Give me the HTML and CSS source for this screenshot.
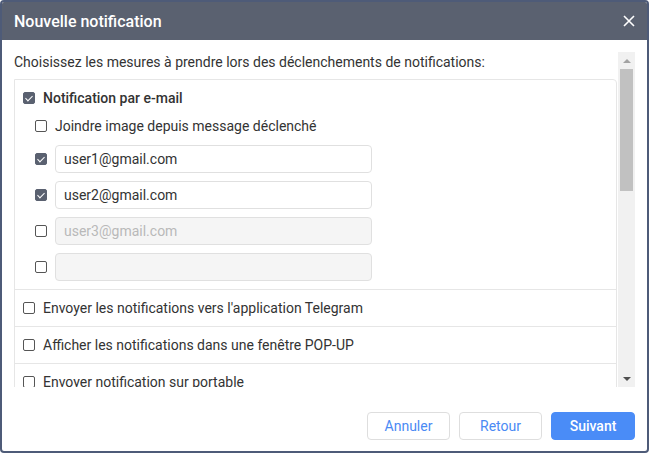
FILE: index.html
```html
<!DOCTYPE html>
<html lang="fr">
<head>
<meta charset="utf-8">
<title>Nouvelle notification</title>
<link rel="stylesheet" href="styles.css">
</head>
<body>
<div class="dialog">
  <div class="header">
    <span class="title">Nouvelle notification</span>
    <svg class="close" width="12" height="12" viewBox="0 0 12 12"><path d="M1 1 L11 11 M11 1 L1 11" stroke="#fff" stroke-width="1.6" fill="none"/></svg>
  </div>
  <div class="main">
    <div class="content">
      <p class="intro">Choisissez les mesures à prendre lors des déclenchements de notifications:</p>
      <div class="list">
        <div class="section">
          <div class="row strong"><span class="cb checked"></span>Notification par e-mail</div>
          <div class="sub">
            <div class="row"><span class="cb"></span>Joindre image depuis message déclenché</div>
            <div class="inputs">
              <div class="irow"><span class="cb checked"></span><div class="field">user1@gmail.com</div></div>
              <div class="irow"><span class="cb checked"></span><div class="field">user2@gmail.com</div></div>
              <div class="irow"><span class="cb"></span><div class="field disabled">user3@gmail.com</div></div>
              <div class="irow"><span class="cb"></span><div class="field disabled"></div></div>
            </div>
          </div>
        </div>
        <div class="section">
          <div class="row"><span class="cb"></span>Envoyer les notifications vers l'application Telegram</div>
        </div>
        <div class="section">
          <div class="row"><span class="cb"></span>Afficher les notifications dans une fenêtre POP-UP</div>
        </div>
        <div class="section">
          <div class="row"><span class="cb"></span>Envoyer notification sur portable</div>
        </div>
      </div>
    </div>
    <div class="scrollbar">
      <div class="arrow up"></div>
      <div class="track"><div class="thumb"></div></div>
      <div class="arrow down"></div>
    </div>
  </div>
  <div class="footer">
    <button class="btn">Annuler</button>
    <button class="btn">Retour</button>
    <button class="btn primary">Suivant</button>
  </div>
</div>
</body>
</html>
```

FILE: styles.css
```css
* { box-sizing: border-box; }
html, body { margin: 0; padding: 0; }
body {
  width: 649px;
  height: 453px;
  font-family: Roboto, "Liberation Sans", Arial, sans-serif;
  font-size: 14px;
  color: #333;
  background: #fff;
  overflow: hidden;
}
.dialog {
  width: 649px;
  height: 453px;
  border: 2px solid #4e5b78;
  border-radius: 4px;
  display: flex;
  flex-direction: column;
  background: #fff;
  overflow: hidden;
}
.header {
  height: 38px;
  flex: none;
  background: #5a6170;
  display: flex;
  align-items: center;
  justify-content: space-between;
  padding: 0 12px 0 12px;
}
.title {
  color: #fff;
  font-size: 16px;
  font-weight: 500;
}
.close { display: block; margin-right: 0; }
.main {
  height: 347px;
  flex: none;
  padding: 12px 12px 0 12px;
  display: flex;
  gap: 1px;
}
.content {
  flex: 1;
  height: 335px;
  overflow: hidden;
}
.intro {
  margin: 0 0 7px 0;
  line-height: 20px;
}
.list {
  border: 1px solid #e6e6e6;
  border-top-right-radius: 4px;
}
.section {
  padding: 8px 8px;
  border-bottom: 1px solid #e6e6e6;
}
.row {
  display: flex;
  align-items: center;
  gap: 8px;
  line-height: 20px;
}
.row.strong { font-weight: 500; }
.sub {
  padding-left: 12px;
  padding-top: 8px;
}
.inputs {
  display: flex;
  flex-direction: column;
  gap: 8px;
  padding-top: 9px;
}
.irow {
  display: flex;
  align-items: center;
  gap: 8px;
}
.field {
  width: 317px;
  height: 28px;
  border: 1px solid #e0e0e0;
  border-radius: 4px;
  padding: 0 8px;
  line-height: 26px;
  background: #fff;
  color: #333;
}
.field.disabled {
  background: #f5f5f5;
  color: #b9b9b9;
}
.cb {
  flex: none;
  width: 12px;
  height: 12px;
  border: 1px solid #555;
  border-radius: 2px;
  background: #fff;
  position: relative;
}
.cb.checked {
  background: #5a6170;
  border-color: #5a6170;
}
.cb.checked::after {
  content: "";
  position: absolute;
  left: 3px;
  top: 1px;
  width: 3px;
  height: 6px;
  border: solid #fff;
  border-width: 0 1.5px 1.5px 0;
  transform: rotate(45deg);
}
.scrollbar {
  width: 17px;
  height: 335px;
  flex: none;
  background: #f1f1f1;
  display: flex;
  flex-direction: column;
}
.arrow {
  height: 17px;
  flex: none;
  display: flex;
  align-items: center;
  justify-content: center;
}
.arrow::before {
  content: "";
  width: 0;
  height: 0;
  border-left: 4px solid transparent;
  border-right: 4px solid transparent;
}
.arrow.up::before { border-bottom: 4px solid #a3a3a3; }
.arrow.down::before { border-top: 4px solid #505050; }
.track {
  flex: 1;
  padding: 0 2px;
}
.thumb {
  height: 122px;
  background: #c1c1c1;
}
.footer {
  flex: 1;
  display: flex;
  justify-content: flex-end;
  align-items: flex-start;
  gap: 9px;
  padding: 25px 12px 0 0;
}
.btn {
  width: 83px;
  height: 28px;
  border: 1px solid #dedede;
  border-radius: 4px;
  background: #fff;
  color: #4a8af4;
  font-family: Roboto, "Liberation Sans", Arial, sans-serif;
  font-size: 14px;
  padding: 0;
  cursor: pointer;
}
.btn.primary {
  width: 84px;
  background: #4a8cf7;
  border-color: #4a8cf7;
  color: #fff;
  font-weight: 500;
}
```
